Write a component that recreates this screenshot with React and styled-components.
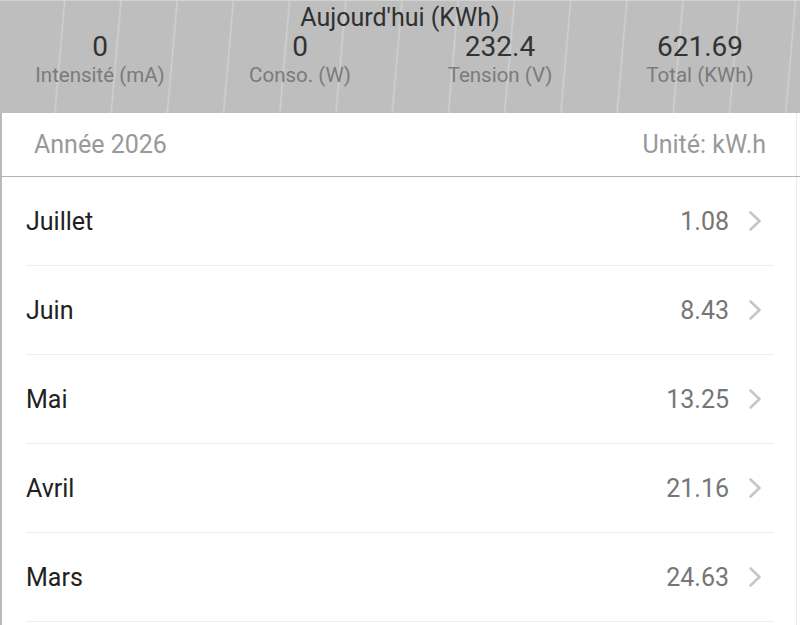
import React from "react";
import styled, { createGlobalStyle } from "styled-components";

const GlobalStyle = createGlobalStyle`
  html, body {
    margin: 0;
    padding: 0;
    background: #ffffff;
  }
  body {
    font-family: Roboto, "Noto Sans", "Liberation Sans", sans-serif;
    -webkit-font-smoothing: antialiased;
  }
`;

const Page = styled.div`
  width: 800px;
  min-height: 625px;
  background: #ffffff;
  overflow: hidden;
`;

const Header = styled.header`
  box-sizing: border-box;
  height: 113px;
  padding-top: 3px;
  border-top: 1px solid #d2d2d2;
  background-color: #bebebe;
  background-image: repeating-linear-gradient(
    95deg,
    rgba(255, 255, 255, 0) 0px,
    rgba(255, 255, 255, 0) 53px,
    rgba(255, 255, 255, 0.28) 54.5px,
    rgba(255, 255, 255, 0) 56px
  );
  background-position: 10px 0;
  display: flex;
  flex-direction: column;
  align-items: stretch;
`;

const Title = styled.div`
  text-align: center;
  font-size: 25px;
  line-height: 27px;
  color: #303030;
`;

const Stats = styled.div`
  display: grid;
  grid-template-columns: repeat(4, 1fr);
`;

const Stat = styled.div`
  display: flex;
  flex-direction: column;
  align-items: center;
`;

const StatValue = styled.span`
  font-size: 28px;
  line-height: 32px;
  color: #333333;
`;

const StatLabel = styled.span`
  font-size: 20.5px;
  line-height: 24px;
  color: #7b7b7b;
`;

const Body = styled.section`
  box-shadow: inset 2px 0 0 #b9b9b9, inset -3px 0 0 #ffffff, inset -4px 0 0 #ececec;
  min-height: 512px;
`;

const SectionHead = styled.div`
  box-sizing: border-box;
  height: 64px;
  padding: 0 34px;
  display: flex;
  align-items: center;
  justify-content: space-between;
  font-size: 25px;
  color: #999999;
  border-bottom: 1px solid #b4b4b4;
`;

const List = styled.ul`
  list-style: none;
  margin: 0;
  padding: 0 26px;
`;

const Row = styled.li`
  box-sizing: border-box;
  height: 89px;
  display: flex;
  align-items: center;
  justify-content: space-between;
  padding-right: 12px;
  border-bottom: 1px solid #eeeeee;
`;

const MonthName = styled.span`
  font-size: 25px;
  color: #212121;
`;

const RowEnd = styled.span`
  display: flex;
  align-items: center;
  gap: 19px;
`;

const Amount = styled.span`
  font-size: 25px;
  color: #767676;
`;

const Chevron = () => (
  <svg width="14" height="22" viewBox="0 0 14 22" aria-hidden="true">
    <polyline
      points="2.5,2.5 11.5,11 2.5,19.5"
      fill="none"
      stroke="#c6c6c6"
      strokeWidth="2.6"
      strokeLinecap="round"
      strokeLinejoin="round"
    />
  </svg>
);

const stats = [
  { value: "0", label: "Intensité (mA)" },
  { value: "0", label: "Conso. (W)" },
  { value: "232.4", label: "Tension (V)" },
  { value: "621.69", label: "Total (KWh)" },
];

const months = [
  { name: "Juillet", kwh: "1.08" },
  { name: "Juin", kwh: "8.43" },
  { name: "Mai", kwh: "13.25" },
  { name: "Avril", kwh: "21.16" },
  { name: "Mars", kwh: "24.63" },
];

export default function App() {
  return (
    <>
      <GlobalStyle />
      <Page>
        <Header>
          <Title>Aujourd'hui (KWh)</Title>
          <Stats>
            {stats.map((s) => (
              <Stat key={s.label}>
                <StatValue>{s.value}</StatValue>
                <StatLabel>{s.label}</StatLabel>
              </Stat>
            ))}
          </Stats>
        </Header>
        <Body>
          <SectionHead>
            <span>Année 2026</span>
            <span>Unité: kW.h</span>
          </SectionHead>
          <List>
            {months.map((m) => (
              <Row key={m.name}>
                <MonthName>{m.name}</MonthName>
                <RowEnd>
                  <Amount>{m.kwh}</Amount>
                  <Chevron />
                </RowEnd>
              </Row>
            ))}
          </List>
        </Body>
      </Page>
    </>
  );
}
